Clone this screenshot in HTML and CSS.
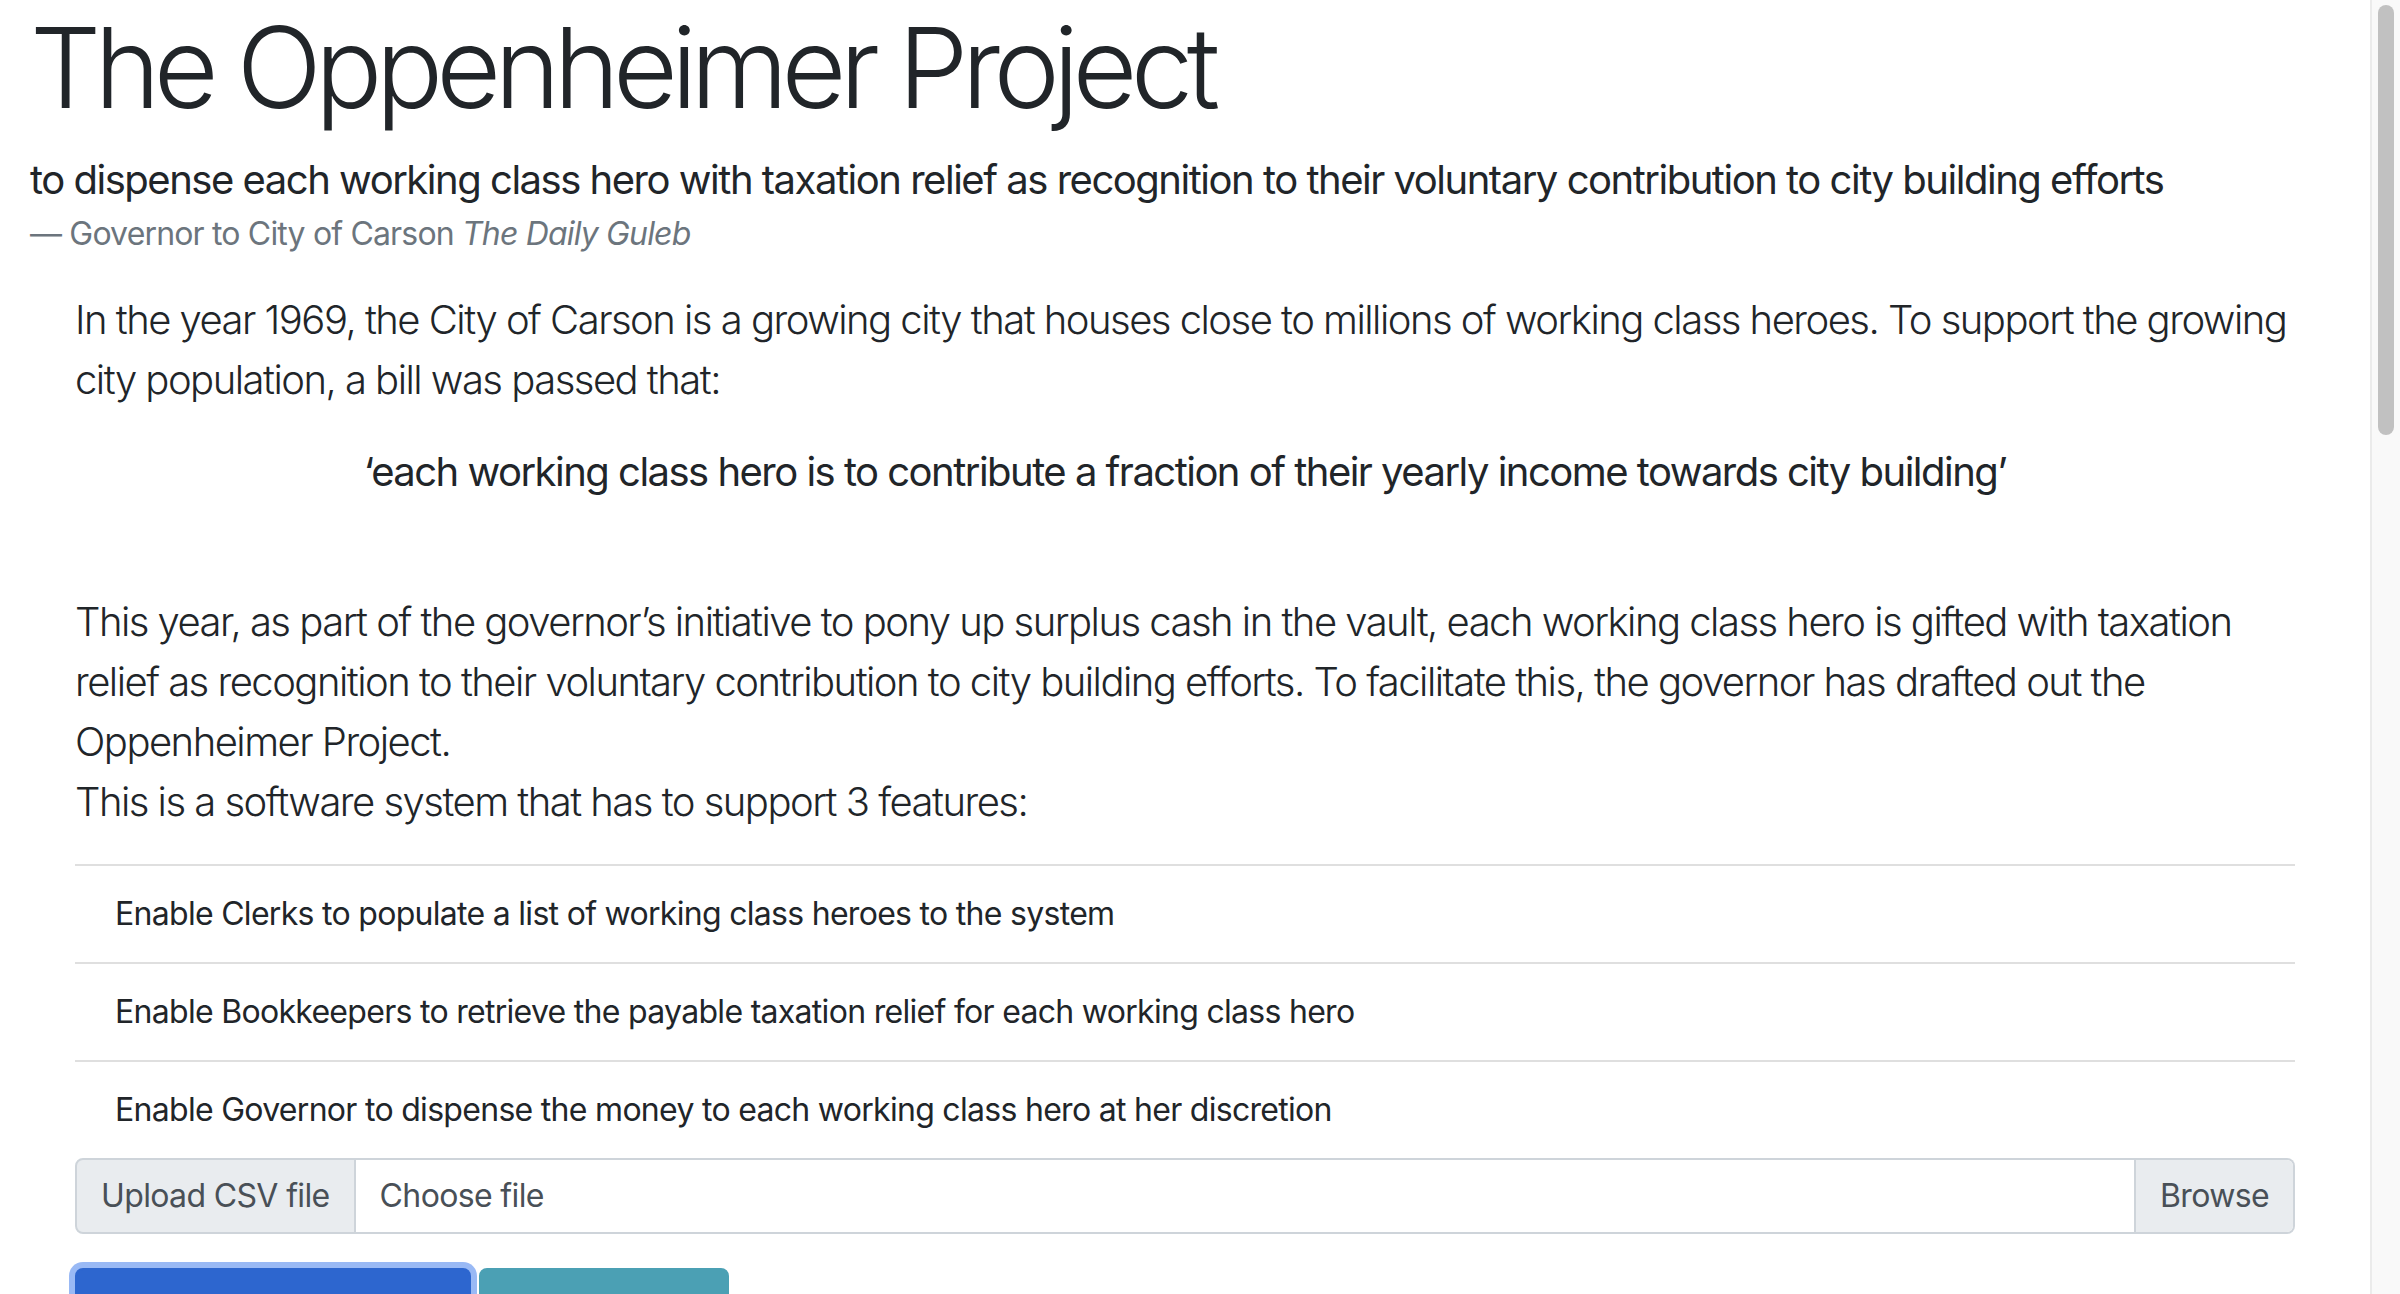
FILE: index.html
```html
<!DOCTYPE html>
<html lang="en">
<head>
<meta charset="utf-8">
<title>The Oppenheimer Project</title>
<link rel="stylesheet" href="styles.css">
</head>
<body>
<div class="page">
  <main class="container">
    <h1 class="display">The Oppenheimer Project</h1>
    <blockquote class="blockquote">
      <p>to dispense each working class hero with taxation relief as recognition to their voluntary contribution to city building efforts</p>
      <footer class="blockquote-footer">Governor to City of Carson <cite>The Daily Guleb</cite></footer>
    </blockquote>
    <section class="content">
      <p class="lead">In the year 1969, the City of Carson is a growing city that houses close to millions of working class heroes. To support the growing city population, a bill was passed that:</p>
      <p class="quote">‘each working class hero is to contribute a fraction of their yearly income towards city building’</p>
      <p class="lead">This year, as part of the governor’s initiative to pony up surplus cash in the vault, each working class hero is gifted with taxation relief as recognition to their voluntary contribution to city building efforts. To facilitate this, the governor has drafted out the Oppenheimer Project.<br>This is a software system that has to support 3 features:</p>
      <ul class="list-group">
        <li class="list-group-item">Enable Clerks to populate a list of working class heroes to the system</li>
        <li class="list-group-item">Enable Bookkeepers to retrieve the payable taxation relief for each working class hero</li>
        <li class="list-group-item">Enable Governor to dispense the money to each working class hero at her discretion</li>
      </ul>
      <div class="input-group">
        <span class="input-prepend">Upload CSV file</span>
        <label class="file-field">
          <span class="file-label">Choose file</span>
          <span class="file-browse">Browse</span>
        </label>
      </div>
      <div class="actions">
        <button class="btn btn-primary">Populate heroes list</button>
        <button class="btn btn-info">View reliefs</button>
      </div>
    </section>
  </main>
  <aside class="scrollbar"><div class="scroll-thumb"></div></aside>
</div>
</body>
</html>
```

FILE: styles.css
```css
html, body {
  margin: 0;
  padding: 0;
  height: 100%;
  overflow: hidden;
  background: #ffffff;
}

body {
  font-family: Inter, "Liberation Sans", sans-serif;
  color: #212529;
  font-size: 32px;
  line-height: 1.5;
}

.page {
  display: flex;
  height: 100vh;
}

.container {
  flex: 1;
  padding: 0 30px;
  min-width: 0;
}

.display {
  margin: 0 0 16px;
  font-size: 112px;
  font-weight: 300;
  line-height: 1.2;
  letter-spacing: -0.06em;
}

.blockquote {
  margin: 0 0 32px;
}

.blockquote p {
  margin: 0;
  font-size: 40px;
  line-height: 1.5;
  letter-spacing: -0.037em;
}

.blockquote-footer {
  display: block;
  font-size: 32px;
  line-height: 1.5;
  color: #6c757d;
  letter-spacing: -0.026em;
}

.blockquote-footer::before {
  content: "\2014\00A0";
}

.blockquote-footer cite {
  font-style: italic;
}

.content {
  margin: 0 45px;
}

.lead {
  margin: 0 0 32px;
  font-size: 40px;
  font-weight: 300;
  line-height: 1.5;
  letter-spacing: -0.038em;
}

.quote {
  margin: 0 0 90px;
  font-size: 40px;
  font-weight: 400;
  line-height: 1.5;
  text-align: center;
  letter-spacing: -0.038em;
}

.list-group {
  list-style: none;
  margin: 0;
  padding: 0;
  border-top: 2px solid #dfdfdf;
}

.list-group-item {
  padding: 24px 40px;
  font-size: 32px;
  line-height: 48px;
  letter-spacing: -0.022em;
  border-bottom: 2px solid #dfdfdf;
}

.list-group-item:last-child {
  border-bottom: 0;
}

.input-group {
  display: flex;
  height: 76px;
  margin-bottom: 32px;
  color: #495057;
  font-size: 32px;
  letter-spacing: -0.02em;
}

.input-prepend {
  display: flex;
  align-items: center;
  padding: 0 24px;
  background: #e9ecef;
  border: 2px solid #ced4da;
  border-radius: 8px 0 0 8px;
  white-space: nowrap;
}

.file-field {
  flex: 1;
  display: flex;
  justify-content: space-between;
  border: 2px solid #ced4da;
  border-left: 0;
  border-radius: 0 8px 8px 0;
  overflow: hidden;
}

.file-label {
  display: flex;
  align-items: center;
  padding: 0 24px;
}

.file-browse {
  display: flex;
  align-items: center;
  padding: 0 24px;
  background: #e9ecef;
  border-left: 2px solid #ced4da;
}

.actions {
  display: flex;
  align-items: flex-start;
  gap: 8px;
  padding-top: 2px;
}

.btn {
  box-sizing: border-box;
  height: 76px;
  font-family: inherit;
  font-size: 32px;
  line-height: 48px;
  padding: 20px 24px 4px;
  border: 2px solid transparent;
  border-radius: 8px;
  color: #ffffff;
  cursor: pointer;
}

.btn-primary {
  width: 396px;
  background: #2d66cf;
  border-color: #2d66cf;
  box-shadow: 0 0 0 6px #99b9f5;
}

.btn-info {
  width: 250px;
  background: #4ba0b4;
  border-color: #4ba0b4;
}

.scrollbar {
  width: 28px;
  flex: none;
  background: #f9f9f9;
  border-left: 2px solid #ebebeb;
  position: relative;
}

.scroll-thumb {
  position: absolute;
  left: 6px;
  top: 5px;
  width: 16px;
  height: 430px;
  background: #c1c1c1;
  border-radius: 8px;
}
```
